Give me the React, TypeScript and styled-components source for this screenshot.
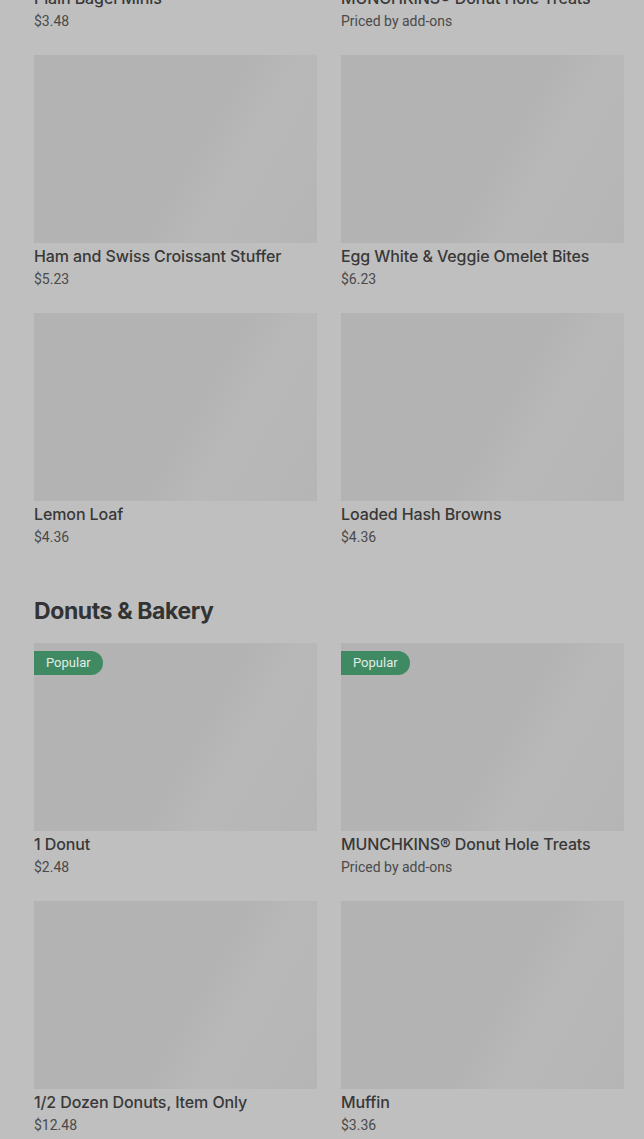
import React from 'react';
import styled, { createGlobalStyle } from 'styled-components';

type Item = { name: string; price: string; popular?: boolean };

const breakfast: Item[] = [
  { name: 'Plain Bagel Minis', price: '$3.48' },
  { name: 'MUNCHKINS® Donut Hole Treats', price: 'Priced by add-ons' },
  { name: 'Ham and Swiss Croissant Stuffer', price: '$5.23' },
  { name: 'Egg White & Veggie Omelet Bites', price: '$6.23' },
  { name: 'Lemon Loaf', price: '$4.36' },
  { name: 'Loaded Hash Browns', price: '$4.36' },
];

const bakery: Item[] = [
  { name: '1 Donut', price: '$2.48', popular: true },
  { name: 'MUNCHKINS® Donut Hole Treats', price: 'Priced by add-ons', popular: true },
  { name: '1/2 Dozen Donuts, Item Only', price: '$12.48' },
  { name: 'Muffin', price: '$3.36' },
];

const GlobalStyle = createGlobalStyle`
  html, body {
    margin: 0;
    background: #bfbfbf;
    overflow: hidden;
  }
  body {
    font-family: Inter, 'Noto Sans', sans-serif;
    color: #3a3a3a;
  }
`;

const Page = styled.div`
  height: 1139px;
  overflow: hidden;
  background: #bfbfbf;
`;

// list is scrolled: the first row's picture sits above the viewport
const Menu = styled.div`
  margin-top: -203px;
  padding: 0 20px 0 34px;
`;

const Section = styled.section`
  & + & {
    margin-top: 46px;
  }
`;

const Heading = styled.h2`
  margin: 0 0 14px;
  font-family: Inter, 'Noto Sans', sans-serif;
  font-size: 23px;
  font-weight: 700;
  letter-spacing: -0.4px;
  line-height: 36px;
  color: #333333;
`;

const Grid = styled.div`
  display: grid;
  grid-template-columns: 283px 283px;
  column-gap: 24px;
  row-gap: 24px;
`;

const Card = styled.div`
  display: flex;
  flex-direction: column;
`;

const Thumb = styled.div`
  position: relative;
  height: 188px;
  background: linear-gradient(
    120deg,
    #b3b3b3 0%,
    #b3b3b3 55%,
    #b8b8b8 68%,
    #b7b7b7 85%,
    #b5b5b5 100%
  );
`;

const Badge = styled.span`
  position: absolute;
  top: 8px;
  left: 0;
  height: 24px;
  padding: 0 12px 0 12px;
  border-radius: 0 12px 12px 0;
  background: #3f8a63;
  color: #e3ece6;
  font-family: Roboto, 'Noto Sans', sans-serif;
  font-size: 13px;
  line-height: 24px;
`;

const Title = styled.div`
  margin-top: 2px;
  font-family: Inter, 'Noto Sans', sans-serif;
  font-size: 16px;
  font-weight: 500;
  line-height: 22px;
  color: #383838;
  letter-spacing: -0.1px;
`;

const Price = styled.div`
  margin-top: 2px;
  font-family: Roboto, 'Noto Sans', sans-serif;
  font-size: 14px;
  line-height: 20px;
  color: #4a4a4a;
`;

const MenuCard = ({ item }: { item: Item }) => (
  <Card>
    <Thumb>{item.popular && <Badge>Popular</Badge>}</Thumb>
    <Title>{item.name}</Title>
    <Price>{item.price}</Price>
  </Card>
);

export default function App() {
  return (
    <Page>
      <GlobalStyle />
      <Menu>
        <Section>
          <Grid>
            {breakfast.map((item, i) => (
              <MenuCard key={i} item={item} />
            ))}
          </Grid>
        </Section>
        <Section>
          <Heading>Donuts &amp; Bakery</Heading>
          <Grid>
            {bakery.map((item, i) => (
              <MenuCard key={i} item={item} />
            ))}
          </Grid>
        </Section>
      </Menu>
    </Page>
  );
}
